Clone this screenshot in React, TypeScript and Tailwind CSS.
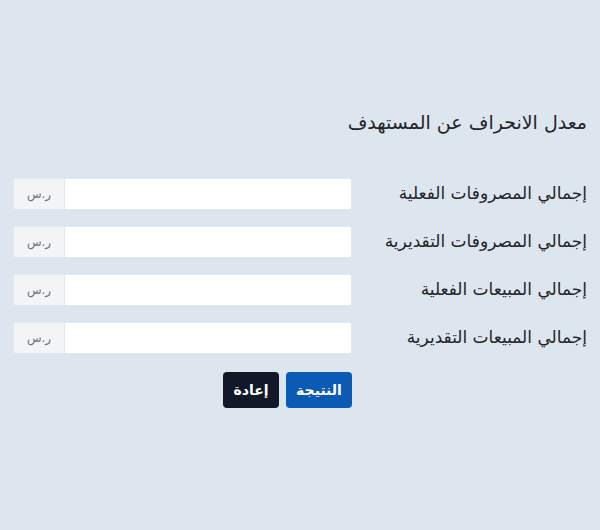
import React from "react";

const fields = [
  "إجمالي المصروفات الفعلية",
  "إجمالي المصروفات التقديرية",
  "إجمالي المبيعات الفعلية",
  "إجمالي المبيعات التقديرية",
];

export default function App() {
  return (
    <div
      dir="rtl"
      className="min-h-[530px] w-full bg-[#dde6ef] px-[13px] pt-[108px] text-[#212529]"
      style={{ fontFamily: '"DejaVu Sans", "Noto Sans", sans-serif' }}
    >
      <h2 className="text-[19px] leading-[28px] mb-[42px]">معدل الانحراف عن المستهدف</h2>

      <form className="flex flex-col gap-[16px]">
        {fields.map((label) => (
          <div key={label} className="flex items-center">
            <label className="w-[235px] shrink-0 text-[17px]">{label}</label>
            <div className="flex flex-1 h-[32px]">
              <input
                type="text"
                className="flex-1 min-w-0 bg-white border border-[#e3e8ee] rounded-r-[3px] px-3 outline-none"
              />
              <span className="w-[51px] flex items-center justify-center bg-[#f3f4f6] border border-[#e3e8ee] border-r-0 rounded-l-[3px] text-[12px] text-[#6b7280]">
                ر.س
              </span>
            </div>
          </div>
        ))}

        <div className="flex gap-[7px] pr-[235px] mt-[2px]">
          <button
            type="button"
            className="h-[36px] w-[66px] rounded-[4px] bg-[#0b5ab4] text-white text-[14px] font-semibold"
          >
            النتيجة
          </button>
          <button
            type="button"
            className="h-[36px] w-[56px] rounded-[4px] bg-[#111827] text-white text-[14px] font-semibold"
          >
            إعادة
          </button>
        </div>
      </form>
    </div>
  );
}
